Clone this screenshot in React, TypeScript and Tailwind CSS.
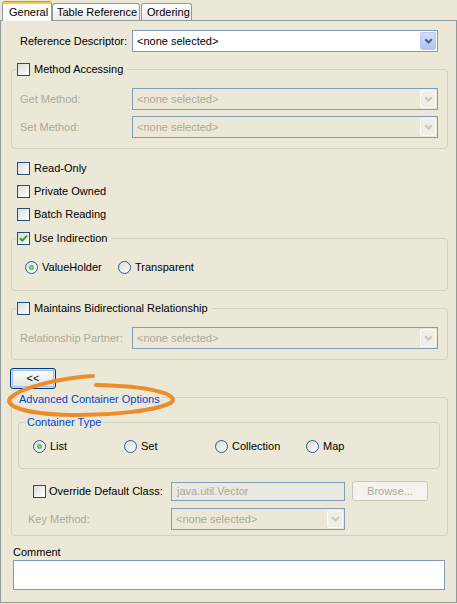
import clsx from "clsx";
import type { ReactNode } from "react";

const muted = "text-[#aca899]";

function Chevron({ disabled }: { disabled?: boolean }) {
  return (
    <svg width="9" height="6" viewBox="0 0 9 6">
      <path
        d="M1.2 1.2 L4.5 4.5 L7.8 1.2"
        fill="none"
        stroke={disabled ? "#c9c7ba" : "#4d6185"}
        strokeWidth="2"
      />
    </svg>
  );
}

function Combo({
  value = "<none selected>",
  disabled,
  className,
}: {
  value?: string;
  disabled?: boolean;
  className?: string;
}) {
  return (
    <div
      className={clsx(
        "flex h-[22px] items-center border border-[#7f9db9] p-[1px]",
        !disabled && "bg-white",
        className
      )}
    >
      <span className={clsx("flex-1 pl-[3px]", disabled ? muted : "text-black")}>{value}</span>
      <span
        className={clsx(
          "flex h-[18px] w-[16px] items-center justify-center rounded-[2px] border",
          disabled
            ? "border-[#fbfbf8] bg-[#efeee7]"
            : "border-[#b9c9f3] bg-linear-to-b from-[#d2defc] to-[#b0c4f5]"
        )}
      >
        <Chevron disabled={disabled} />
      </span>
    </div>
  );
}

function Checkbox({ checked }: { checked?: boolean }) {
  return (
    <span className="flex h-[13px] w-[13px] shrink-0 items-center justify-center border border-[#1c5180] bg-linear-to-br from-[#dcdcd7] to-white">
      {checked && (
        <svg width="11" height="11" viewBox="0 0 11 11">
          <path d="M2 5.2 L4.3 7.6 L9 2.6" fill="none" stroke="#21a121" strokeWidth="2" />
        </svg>
      )}
    </span>
  );
}

function Radio({ checked }: { checked?: boolean }) {
  return (
    <span className="flex h-[13px] w-[13px] shrink-0 items-center justify-center rounded-full border border-[#2b5c8e] bg-linear-to-br from-[#dcdcd7] to-white">
      {checked && (
        <span className="h-[5px] w-[5px] rounded-full bg-radial from-[#8ee58a] to-[#21a121]" />
      )}
    </span>
  );
}

function Group({
  legend,
  className,
  children,
}: {
  legend: ReactNode;
  className?: string;
  children: ReactNode;
}) {
  return (
    <fieldset className={clsx("rounded-[4px] border border-[#d0d0bf]", className)}>
      {legend}
      {children}
    </fieldset>
  );
}

function CheckLegend({ label, checked }: { label: string; checked?: boolean }) {
  return (
    <legend className="ml-[4px] flex h-[14px] items-center gap-[4px] pl-[1px] pr-[4px]">
      <Checkbox checked={checked} />
      <span>{label}</span>
    </legend>
  );
}

function FieldRow({ label, className }: { label: string; className?: string }) {
  return (
    <div className={clsx("flex h-[22px] items-center", className)}>
      <span className={clsx("w-[120px] pl-[8px]", muted)}>{label}</span>
      <Combo disabled className="w-[306px]" />
    </div>
  );
}

function CheckRow({ label, checked }: { label: string; checked?: boolean }) {
  return (
    <div className="flex h-[23px] items-center gap-[4px] pl-[6px]">
      <Checkbox checked={checked} />
      <span>{label}</span>
    </div>
  );
}

function RadioItem({ label, checked, width }: { label: string; checked?: boolean; width: string }) {
  return (
    <div className={clsx("flex items-center gap-[4px]", width)}>
      <Radio checked={checked} />
      <span>{label}</span>
    </div>
  );
}

export default function App() {
  return (
    <div className="relative h-[604px] w-[457px] overflow-hidden bg-[#ebe8d7] font-['Liberation_Sans',Arial,sans-serif] text-[11px] leading-[13px] text-black">
      {/* tab strip */}
      <div className="flex h-[20px] items-end pl-[2px]">
        <div className="relative z-10 -mb-px flex h-[20px] w-[50px] flex-col rounded-t-[3px] border border-b-0 border-[#919b9c] border-t-[#e68b2c] bg-[#fcfcfb]">
          <div className="h-[2px] bg-[#ffc73c]" />
          <div className="flex flex-1 items-center pl-[6px]">General</div>
        </div>
        <div className="flex h-[17px] w-[88px] items-center rounded-t-[3px] border border-b-0 border-[#919b9c] bg-linear-to-b from-white to-[#ecebe6] pl-[4px]">
          Table Reference
        </div>
        <div className="ml-[1px] flex h-[17px] w-[51px] items-center rounded-t-[3px] border border-b-0 border-[#919b9c] bg-linear-to-b from-white to-[#ecebe6] pl-[5px]">
          Ordering
        </div>
      </div>

      {/* tab page */}
      <div className="h-[583px] border border-[#919b9c] pl-[10px] pr-[8px]">
        <div className="mt-[9px] flex h-[22px] items-center">
          <span className="w-[121px] pl-[9px]">Reference Descriptor:</span>
          <Combo className="w-[306px]" />
        </div>

        <Group className="mt-[10px] pb-[10px]" legend={<CheckLegend label="Method Accessing" />}>
          <FieldRow label="Get Method:" className="mt-[12px]" />
          <FieldRow label="Set Method:" className="mt-[6px]" />
        </Group>

        <div className="mt-[8px]">
          <CheckRow label="Read-Only" />
          <CheckRow label="Private Owned" />
          <CheckRow label="Batch Reading" />
        </div>

        <Group className="mt-[5px] pb-[16px]" legend={<CheckLegend label="Use Indirection" checked />}>
          <div className="mt-[16px] flex h-[13px] items-center pl-[13px]">
            <RadioItem label="ValueHolder" checked width="w-[93px]" />
            <RadioItem label="Transparent" width="w-[100px]" />
          </div>
        </Group>

        <Group
          className="mt-[10px] pb-[10px]"
          legend={<CheckLegend label="Maintains Bidirectional Relationship" />}
        >
          <FieldRow label="Relationship Partner:" className="mt-[12px]" />
        </Group>

        <button className="-ml-px mt-[8px] flex h-[21px] w-[46px] items-center justify-center rounded-[3px] border border-[#003c74] bg-linear-to-b from-white to-[#e3e3db] shadow-[inset_0_0_0_1px_#cfe0fa,inset_0_0_0_2px_#a4c0ee]">
          &lt;&lt;
        </button>

        <Group
          className="-mt-px pb-[5px]"
          legend={
            <legend className="ml-[5px] flex h-[18px] items-end px-[2px] text-[#0046d5]">
              Advanced Container Options
            </legend>
          }
        >
          <Group
            className="ml-[6px] mt-[9px] w-[422px] pb-[15px]"
            legend={
              <legend className="ml-[7px] flex h-[14px] items-center px-[1px] text-[#0046d5]">
                Container Type
              </legend>
            }
          >
            <div className="mt-[11px] flex h-[13px] items-center pl-[14px]">
              <RadioItem label="List" checked width="w-[91px]" />
              <RadioItem label="Set" width="w-[91px]" />
              <RadioItem label="Collection" width="w-[91px]" />
              <RadioItem label="Map" width="w-[91px]" />
            </div>
          </Group>

          <div className="mt-[12px] flex h-[20px] items-center pl-[21px]">
            <div className="flex w-[138px] items-center gap-[3px]">
              <Checkbox />
              <span>Override Default Class:</span>
            </div>
            <div className={clsx("flex h-[19px] w-[174px] items-center border border-[#7f9db9] bg-[#ebeae2] pl-[5px]", muted)}>
              java.util.Vector
            </div>
            <div
              className={clsx(
                "ml-[7px] flex h-[20px] w-[76px] items-center justify-center rounded-[3px] border border-[#c9c7ba] bg-[#f4f3ee]",
                muted
              )}
            >
              Browse...
            </div>
          </div>

          <div className="mt-[7px] flex h-[22px] items-center">
            <span className={clsx("w-[159px] pl-[16px]", muted)}>Key Method:</span>
            <Combo disabled className="w-[174px]" />
          </div>
        </Group>

        <div className="mt-[10px] pl-[2px]">Comment</div>
        <div className="ml-[2px] mt-[1px] h-[30px] w-[432px] border border-[#7f9db9] bg-white" />
      </div>

      {/* hand-drawn highlight around the advanced section title */}
      <svg className="pointer-events-none absolute left-0 top-0" width="457" height="604">
        <path
          d="M93 376 C60 378 22 387 10 398 C4 407 28 414 70 415 C112 416 160 410 172 402 C178 394 150 386 96 385"
          fill="none"
          stroke="#ec8c2a"
          strokeWidth="4"
          strokeLinecap="round"
        />
      </svg>
    </div>
  );
}
